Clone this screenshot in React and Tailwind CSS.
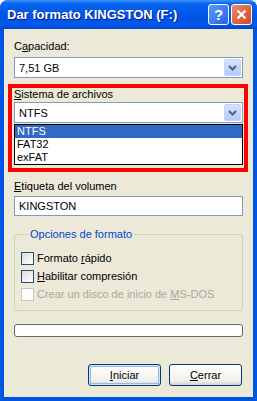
import React from "react";

const font = "font-['Liberation_Sans',Arial,sans-serif]";

function Chevron() {
  return (
    <svg width="9" height="6" viewBox="0 0 9 6" fill="none">
      <path d="M1 1 L4.5 4.5 L8 1" stroke="#4d6185" strokeWidth="2" />
    </svg>
  );
}

function Combo({ value }) {
  return (
    <div className="flex h-[21px] items-stretch border border-[#7f9db9] bg-white p-px">
      <span className="flex-1 pl-[3px] leading-[19px] text-black">{value}</span>
      <span className="flex w-[17px] items-center justify-center rounded-[2px] border border-[#c3d3fd] bg-[linear-gradient(#d6e2fd,#b6c9f6)]">
        <Chevron />
      </span>
    </div>
  );
}

function Check({ label, disabled }) {
  return (
    <div className="flex h-[13px] items-center gap-[3px]">
      <span
        className={
          disabled
            ? "h-[13px] w-[13px] border border-[#cac8bb] bg-white"
            : "h-[13px] w-[13px] border border-[#1c5180] bg-[linear-gradient(135deg,#dcdcd7,#ffffff)]"
        }
      />
      <span className={disabled ? "leading-[13px] text-[#aca899]" : "leading-[13px] text-black"}>{label}</span>
    </div>
  );
}

function XpButton({ children, isDefault }) {
  return (
    <button
      className={
        "h-[22px] w-[73px] rounded-[3px] border border-[#003c74] bg-[linear-gradient(#ffffff,#f0f0ea_80%,#d6d0c5)] text-black " +
        (isDefault ? "shadow-[inset_0_0_0_1px_#cee7ff,inset_0_0_0_2px_#98b8ea]" : "")
      }
    >
      {children}
    </button>
  );
}

export default function App() {
  return (
    <div className={`${font} flex h-[401px] w-[257px] flex-col overflow-hidden rounded-t-[8px] bg-[#0054e3] text-[11px]`}>
      {/* title bar */}
      <div className="flex h-[29px] items-center bg-[linear-gradient(#3d95ff_0%,#0a66f0_12%,#0058e8_45%,#0054e3_60%,#0058ee_85%,#0046c8_100%)] pl-[7px] pr-[5px]">
        <span className="flex-1 text-[13px] font-bold text-white [text-shadow:1px_1px_0_#0a1883]">
          Dar formato KINGSTON (F:)
        </span>
        <div className="flex gap-[2px]">
          <span className="flex h-[21px] w-[21px] items-center justify-center rounded-[3px] border border-white bg-[linear-gradient(135deg,#5d9bff,#2663e0)] text-[15px] font-bold leading-none text-white">
            ?
          </span>
          <span className="flex h-[21px] w-[21px] items-center justify-center rounded-[3px] border border-white bg-[linear-gradient(135deg,#f08a6a,#d0461f)]">
            <svg width="11" height="11" viewBox="0 0 11 11">
              <path d="M1.5 1.5 L9.5 9.5 M9.5 1.5 L1.5 9.5" stroke="white" strokeWidth="2.2" />
            </svg>
          </span>
        </div>
      </div>

      {/* body */}
      <div className="mx-[4px] mb-[4px] flex flex-1 flex-col bg-[#ece9d8] px-[10px] pt-[11px] text-black">
        <div className="leading-[13px]">
          C<u>a</u>pacidad:
        </div>
        <div className="mt-[4px]">
          <Combo value="7,51 GB" />
        </div>

        <div className="-ml-[6px] mt-[6px] w-[240px] border-[4px] border-[#ff0000] pb-[3px] pl-[2px] pr-[1px]">
          <div className="leading-[13px]">
            <u>S</u>istema de archivos
          </div>
          <div className="mt-px">
            <Combo value="NTFS" />
          </div>
          <div className="mt-px border border-black bg-white">
            <div className="h-[13px] bg-[#316ac5] pl-[2px] leading-[13px] text-white">NTFS</div>
            <div className="h-[13px] pl-[2px] leading-[13px]">FAT32</div>
            <div className="h-[13px] pl-[2px] leading-[13px]">exFAT</div>
          </div>
        </div>

        <div className="mt-[8px] leading-[13px]">
          <u>E</u>tiqueta del volumen
        </div>
        <div className="mt-[3px] h-[20px] border border-[#7f9db9] bg-white pl-[4px] leading-[18px]">KINGSTON</div>

        <fieldset className="mt-[12px] rounded-[3px] border border-[#d0d0bf] pb-[9px] pl-[6px]">
          <legend className="ml-[7px] px-[2px] leading-[13px] text-[#0046d5]">Opciones de formato</legend>
          <div className="mt-[11px] flex flex-col gap-[5px]">
            <Check label={<>Formato <u>r</u>ápido</>} />
            <Check label={<><u>H</u>abilitar compresión</>} />
            <Check label={<>Crear un disco de inicio de <u>M</u>S-DOS</>} disabled />
          </div>
        </fieldset>

        <div className="mt-[13px] h-[13px] rounded-[3px] border border-[#686868] bg-white" />

        <div className="mr-px mt-[27px] flex justify-end gap-[8px]">
          <XpButton isDefault>
            <u>I</u>niciar
          </XpButton>
          <XpButton>
            <u>C</u>errar
          </XpButton>
        </div>
      </div>
    </div>
  );
}
